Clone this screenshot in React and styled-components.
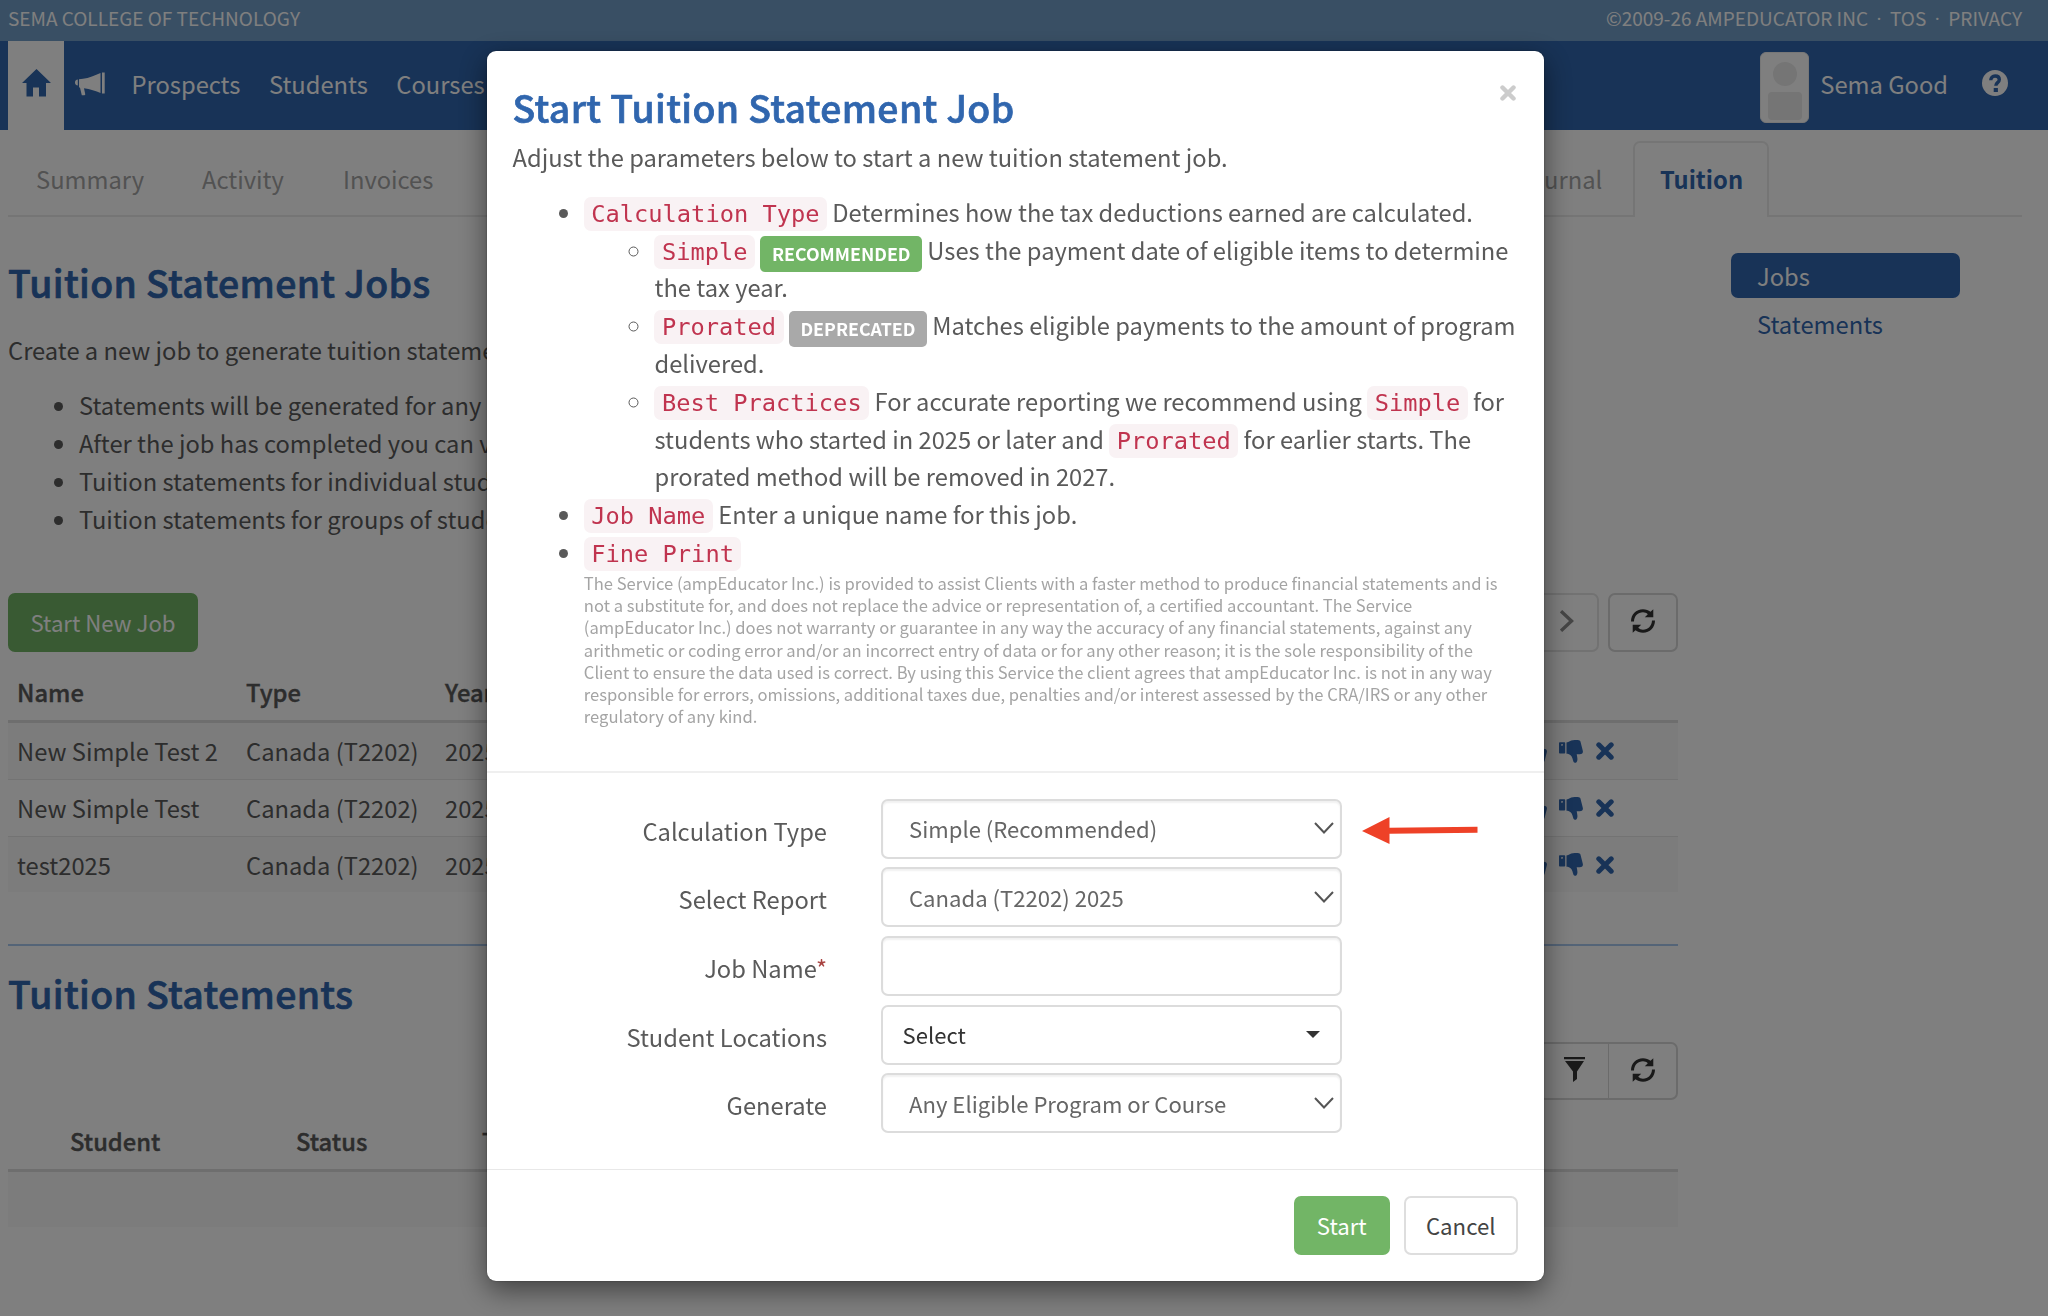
import React from 'react';
import styled, { createGlobalStyle, css } from 'styled-components';

const GlobalStyle = createGlobalStyle`
  * {
    box-sizing: border-box;
  }

  body {
    margin: 0;
    overflow: hidden;
    background: #fff;
    color: #5a5a5a;
    font-family: 'Noto Sans CJK SC', 'Open Sans', sans-serif;
    font-size: 23.72px;
    line-height: 37.8px;
  }

  h1,
  h2,
  p,
  ul {
    margin: 0;
    padding: 0;
  }
`;

const HomeIcon = () => (
  <svg width="29" height="28" viewBox="0 0 29 28" fill="currentColor">
    <path d="M14.5 0 29 14h-5v13.5h-7V18.5h-6v9H4.500V14H0z" />
  </svg>
);

const BullhornIcon = () => (
  <svg width="30" height="24" viewBox="0 0 30 24" fill="currentColor">
    <path d="M2.800 7.500v6C1.200 13.500 0 12.500 0 10.500s1.200-3 2.800-3z" />
    <path d="M4 7.200 8 6.800C14 6 20 3.500 25.500 1v20C21 19 15 17 9 16.200l1.300 6.300-.8.700H6.800L5 15.800l-1-.5z" />
    <path d="M27 .5h2.700v21H27z" />
  </svg>
);

const HelpIcon = () => (
  <svg width="26" height="26" viewBox="0 0 26 26">
    <circle cx="13" cy="13" r="13" fill="#fff" />
    <path
      d="M8.800 10.200c0-2.500 1.700-4.200 4.300-4.200 2.500 0 4.200 1.400 4.200 3.500 0 3.300-3.500 3-3.500 6.300"
      fill="none"
      stroke="#3066ae"
      strokeWidth="3.400"
    />
    <path d="M11.700 18h4.200v4h-4.200z" fill="#3066ae" />
  </svg>
);

const RefreshIcon = () => (
  <svg width="24" height="24" viewBox="0 0 24 24" fill="currentColor">
    <path d="M0 12.500C0 5.500 5 .3 12 .3c3 0 5.600 1 7.500 2.500L22.300.2V8.200h-8.500l3-3C15.500 4 13.800 3.300 12 3.300c-5 0-8.800 3.700-9 9.200z" />
    <path d="M24 11.500c0 7-5 12.200-12 12.200-3 0-5.600-1-7.500-2.500l-2.800 2.600V15.800h8.500l-3 3c1.300 1.200 3 1.900 4.800 1.900 5 0 8.800-3.700 9-9.200z" />
  </svg>
);

const ChevronIcon = () => (
  <svg width="14" height="22" viewBox="0 0 14 22">
    <path d="m1 1.200 10.500 9.800L1 20.800" fill="none" stroke="#8c8c8c" strokeWidth="3.400" />
  </svg>
);

const FilterIcon = () => (
  <svg width="21" height="25" viewBox="0 0 21 25" fill="currentColor">
    <path d="M0 0h21v2.200H0zM1 4h19l-7 10.500V22l-4 3V14.500z" />
  </svg>
);

const ThumbIcon = () => (
  <svg width="24" height="23" viewBox="0 0 24 23" fill="currentColor">
    <path
      fillRule="evenodd"
      d="M.8 2.200h4.600c.5 0 .8.300.8.800v9.800c0 .5-.3.800-.8.800H.8c-.5 0-.8-.3-.8-.8V3c0-.5.3-.8.8-.8zM3 4a.9.900 0 1 0 .1 1.800A.9.900 0 0 0 3 4z"
    />
    <path d="M7.500 2.600C10 1.800 11.500.5 14 .3c2.500-.3 5-.3 6.500.3.800.4 1 1 1.200 1.800l2.100 8.300c.4 1.800-.3 3-1.800 3.300-1.200.3-2.800.2-4.300.2.200 1.800.9 3.500.7 5.500-.1 2-1 3.100-2.400 3.100-1.300 0-1.600-1-2-2.500-.7-3-1.500-4.800-4-6-1-.4-1.800-.5-2.500-.5z" />
  </svg>
);

const RemoveIcon = ({ size = 18 }) => (
  <svg width={size} height={size} viewBox="0 0 18 18">
    <path
      d="m2.800 2.800 12.400 12.400M15.200 2.800 2.800 15.200"
      stroke="currentColor"
      strokeWidth="5"
      strokeLinecap="round"
    />
  </svg>
);

const SelectArrow = () => (
  <svg width="20" height="12" viewBox="0 0 20 12">
    <path d="m1 1 9 9.500L19 1" fill="none" stroke="#555" strokeWidth="2" />
  </svg>
);

const PointerArrow = () => (
  <svg width="116" height="28" viewBox="0 0 116 28" fill="#ee4127">
    <path d="M0 14 27.500 0v10.700l88-.9v6l-88 .9V27z" />
  </svg>
);

const jobs = ['New Simple Test 2', 'New Simple Test', 'test2025'];

const fields = [
  { label: 'Calculation Type', value: 'Simple (Recommended)', pointer: true },
  { label: 'Select Report', value: 'Canada (T2202) 2025' },
  { label: 'Job Name', required: true },
  { label: 'Student Locations', value: 'Select', dropdown: true },
  { label: 'Generate', value: 'Any Eligible Program or Course' },
];

const Field = ({ label, value, required, dropdown, pointer }) => (
  <FieldRow>
    <Label>
      {label}
      {required && <Required>*</Required>}
    </Label>
    <Control $dropdown={dropdown}>
      <ControlText>{value}</ControlText>
      {dropdown && <Caret />}
      {value && !dropdown && <SelectArrow />}
    </Control>
    {pointer && <PointerArrow />}
  </FieldRow>
);

const StartJobModal = () => (
  <Backdrop>
    <Modal>
      <ModalHeader>
        <TitleRow>
          <ModalTitle>Start Tuition Statement Job</ModalTitle>
          <CloseButton>
            <RemoveIcon size={16} />
          </CloseButton>
        </TitleRow>
        <p>Adjust the parameters below to start a new tuition statement job.</p>
        <HelpList>
          <li>
            <Code>Calculation Type</Code> Determines how the tax deductions
            earned are calculated.
            <SubList>
              <li>
                <Code>Simple</Code> <Badge $color="#72b566">Recommended</Badge>{' '}
                Uses the payment date of eligible items to determine the tax
                year.
              </li>
              <li>
                <Code>Prorated</Code> <Badge $color="#a9a9a9">Deprecated</Badge>{' '}
                Matches eligible payments to the amount of program delivered.
              </li>
              <li>
                <Code>Best Practices</Code> For accurate reporting we recommend
                using <Code>Simple</Code> for students who started in 2025 or
                later and <Code>Prorated</Code> for earlier starts. The prorated
                method will be removed in 2027.
              </li>
            </SubList>
          </li>
          <li>
            <Code>Job Name</Code> Enter a unique name for this job.
          </li>
          <li>
            <Code>Fine Print</Code>
            <FinePrint>
              The Service (ampEducator Inc.) is provided to assist Clients with
              a faster method to produce financial statements and is not a
              substitute for, and does not replace the advice or representation
              of, a certified accountant. The Service (ampEducator Inc.) does
              not warranty or guarantee in any way the accuracy of any financial
              statements, against any arithmetic or coding error and/or an
              incorrect entry of data or for any other reason; it is the sole
              responsibility of the Client to ensure the data used is correct.
              By using this Service the client agrees that ampEducator Inc. is
              not in any way responsible for errors, omissions, additional taxes
              due, penalties and/or interest assessed by the CRA/IRS or any
              other regulatory of any kind.
            </FinePrint>
          </li>
        </HelpList>
      </ModalHeader>
      <ModalBody>
        {fields.map((field) => (
          <Field key={field.label} {...field} />
        ))}
      </ModalBody>
      <ModalFooter>
        <Button $primary $width={95.5}>
          Start
        </Button>
        <Button $width={113.5}>Cancel</Button>
      </ModalFooter>
    </Modal>
  </Backdrop>
);

const App = () => (
  <>
    <GlobalStyle />
    <TopBar>
      <span>SEMA COLLEGE OF TECHNOLOGY</span>
      <TopLinks>
        <span>©2009-26 AMPEDUCATOR INC</span>
        <Dot>·</Dot>
        <span>TOS</span>
        <Dot>·</Dot>
        <span>PRIVACY</span>
      </TopLinks>
    </TopBar>
    <NavBar>
      <HomeTab>
        <HomeIcon />
      </HomeTab>
      <NavIcon>
        <BullhornIcon />
      </NavIcon>
      <NavLinks>
        <span>Prospects</span>
        <span>Students</span>
        <span>Courses</span>
      </NavLinks>
      <UserBox>
        <Avatar>
          <AvatarHead />
          <AvatarBody />
        </Avatar>
        <span>Sema Good</span>
      </UserBox>
      <HelpLink>
        <HelpIcon />
      </HelpLink>
    </NavBar>
    <TabBar>
      <Tab $width={166}>Summary</Tab>
      <Tab $width={141}>Activity</Tab>
      <Tab $width={150}>Invoices</Tab>
      <TabSpacer />
      <Tab $width={144}>Journal</Tab>
      <ActiveTab>Tuition</ActiveTab>
      <TabEnd />
    </TabBar>
    <Columns>
      <Main>
        <PageTitle>Tuition Statement Jobs</PageTitle>
        <Intro>Create a new job to generate tuition statements.</Intro>
        <IntroList>
          <li>Statements will be generated for any</li>
          <li>After the job has completed you can view</li>
          <li>Tuition statements for individual students</li>
          <li>Tuition statements for groups of students</li>
        </IntroList>
        <Toolbar>
          <Button $primary $width={190}>
            Start New Job
          </Button>
          <ToolButtons>
            <ToolButton $muted>
              <ChevronIcon />
            </ToolButton>
            <ToolButton>
              <RefreshIcon />
            </ToolButton>
          </ToolButtons>
        </Toolbar>
        <HeadRow>
          <span>Name</span>
          <span>Type</span>
          <span>Year</span>
        </HeadRow>
        {jobs.map((name, i) => (
          <JobRow key={name} $striped={i % 2 === 0} $first={i === 0}>
            <span>{name}</span>
            <span>Canada (T2202)</span>
            <span>2025</span>
            <Actions>
              <Flipped>
                <ThumbIcon />
              </Flipped>
              <ThumbIcon />
              <RemoveIcon />
            </Actions>
          </JobRow>
        ))}
        <Rule />
        <SectionTitle>Tuition Statements</SectionTitle>
        <StatementTools>
          <ToolGroup>
            <GroupButton>
              <FilterIcon />
            </GroupButton>
            <GroupButton>
              <RefreshIcon />
            </GroupButton>
          </ToolGroup>
        </StatementTools>
        <StatementHead>
          <span>Student</span>
          <span>Status</span>
          <span>Type</span>
        </StatementHead>
        <EmptyRow />
      </Main>
      <SideNav>
        <SideLink $active>Jobs</SideLink>
        <SideLink>Statements</SideLink>
      </SideNav>
    </Columns>
    <StartJobModal />
  </>
);

const TopBar = styled.div`
  display: flex;
  justify-content: space-between;
  height: 41px;
  padding: 0 26px 0 8px;
  background: #729ec8;
  color: #fff;
  font-size: 19px;
  line-height: 36px;
`;

const TopLinks = styled.div`
  display: flex;
  gap: 8.5px;
`;

const Dot = styled.span`
  font-family: 'Open Sans', sans-serif;
`;

const NavBar = styled.div`
  display: flex;
  height: 88.5px;
  padding: 0 40px 0 8px;
  background: #3066ae;
  color: #fff;
  line-height: 86px;
`;

const HomeTab = styled.div`
  width: 56px;
  height: 89px;
  padding: 28px 0 0 14px;
  background: #fff;
  color: #3066ae;
  line-height: 0;
`;

const NavIcon = styled.div`
  width: 67.5px;
  padding: 31px 0 0 11px;
  line-height: 0;
`;

const NavLinks = styled.div`
  display: flex;
  gap: 28.5px;
`;

const UserBox = styled.div`
  display: flex;
  gap: 11px;
  margin-left: auto;
`;

const Avatar = styled.div`
  display: flex;
  flex-direction: column;
  align-items: center;
  gap: 6px;
  width: 49px;
  height: 71px;
  margin-top: 11px;
  padding-top: 9px;
  border: 1px solid #eee;
  border-radius: 6px;
  background: #fff;
`;

const AvatarHead = styled.div`
  width: 24px;
  height: 24px;
  border-radius: 50%;
  background: #eaeaea;
`;

const AvatarBody = styled.div`
  width: 34px;
  height: 28px;
  border-radius: 4px;
  background: #eaeaea;
`;

const HelpLink = styled.div`
  padding: 29px 0 0 34px;
  line-height: 0;
`;

const TabBar = styled.div`
  display: flex;
  align-items: stretch;
  height: 76px;
  margin: 11.5px 26px 0 8px;
  line-height: 75px;
`;

const Tab = styled.div`
  width: ${({ $width }) => $width}px;
  padding-left: 28px;
  border-bottom: 2px solid #ebebeb;
  color: #a4a4a4;
`;

const TabSpacer = styled.div`
  flex: 1;
  border-bottom: 2px solid #ebebeb;
`;

const ActiveTab = styled.div`
  width: 136px;
  padding-left: 1px;
  border: 2px solid #ebebeb;
  border-bottom: 0;
  border-radius: 7px 7px 0 0;
  color: #3066ae;
  font-weight: 700;
  line-height: 71px;
  text-align: center;
`;

const TabEnd = styled.div`
  width: 253px;
  border-bottom: 2px solid #ebebeb;
`;

const Columns = styled.div`
  display: flex;
  padding: 36px 88px 0 8px;
  justify-content: space-between;
`;

const Main = styled.div`
  width: 1669.5px;
`;

/* medium weight thickened slightly, between medium and bold */
const titleStyles = css`
  color: #3066ae;
  font-size: 37.4px;
  font-weight: 500;
  letter-spacing: 0.35px;
  line-height: 48px;
  -webkit-text-stroke: 0.7px currentColor;
`;

const headStyles = css`
  font-weight: 500;
  -webkit-text-stroke: 0.4px currentColor;
`;

const PageTitle = styled.h1`
  ${titleStyles}
  margin-top: 5px;
`;

const Intro = styled.p`
  margin-top: 25px;
`;

const IntroList = styled.ul`
  margin-top: 17.5px;
  padding-left: 71px;
`;

const Toolbar = styled.div`
  display: flex;
  justify-content: space-between;
  margin-top: 56px;
`;

const Button = styled.button`
  width: ${({ $width }) => $width}px;
  height: 59px;
  padding: 0;
  border: 2px solid ${({ $primary }) => ($primary ? '#72b566' : '#dedede')};
  border-radius: 7px;
  background: ${({ $primary }) => ($primary ? '#72b566' : '#fff')};
  color: ${({ $primary }) => ($primary ? '#fff' : '#444')};
  font: inherit;
  font-size: 22.2px;
`;

const ToolButtons = styled.div`
  display: flex;
  gap: 9px;
`;

const ToolButton = styled.div`
  display: flex;
  align-items: center;
  justify-content: center;
  width: 70px;
  height: 59px;
  padding: 0 0 3px ${({ $muted }) => ($muted ? '6px' : '0')};
  border: 2px solid ${({ $muted }) => ($muted ? '#e4e4e4' : '#d6d6d6')};
  border-radius: 7px;
  color: #333;
`;

const HeadRow = styled.div`
  display: grid;
  grid-template-columns: 229px 199px 1fr;
  height: 70.5px;
  padding: 21px 0 0 9px;
  border-bottom: 3px solid #dcdcdc;
  ${headStyles}
`;

const JobRow = styled.div`
  display: grid;
  grid-template-columns: 229px 199px 1fr auto;
  align-items: center;
  height: 56.5px;
  padding: 0 64px 0 9px;
  border-top: ${({ $first }) => ($first ? 0 : '1.5px solid #e6e6e6')};
  background: ${({ $striped }) => ($striped ? '#f8f8f8' : '#fff')};
`;

const Actions = styled.div`
  display: flex;
  align-items: center;
  gap: 13px;
  color: #3066ae;
  line-height: 0;
`;

const Flipped = styled.span`
  margin-right: -1px;
  transform: scaleY(-1);
`;

const Rule = styled.div`
  height: 2px;
  margin-top: 52px;
  background: #a9c8ee;
`;

const SectionTitle = styled.h2`
  ${titleStyles}
  margin-top: 23px;
`;

const StatementTools = styled.div`
  display: flex;
  justify-content: flex-end;
  margin-top: 24.5px;
`;

const ToolGroup = styled.div`
  display: flex;
  height: 58px;
  border: 2px solid #d6d6d6;
  border-radius: 7px;
  color: #333;
`;

const GroupButton = styled.div`
  display: flex;
  align-items: center;
  justify-content: center;
  width: 68px;
  padding: 0 0 2px 2px;

  & + & {
    border-left: 1px solid #d6d6d6;
  }
`;

const StatementHead = styled.div`
  display: grid;
  grid-template-columns: 226px 186px 1fr;
  height: 72px;
  padding: 22px 0 0 62px;
  border-bottom: 3px solid #dcdcdc;
  ${headStyles}
`;

const EmptyRow = styled.div`
  height: 55px;
  background: #f8f8f8;
`;

const SideNav = styled.div`
  width: 229.5px;
`;

const SideLink = styled.div`
  height: 45px;
  margin-bottom: 3px;
  padding-left: 26.5px;
  border-radius: 7px;
  background: ${({ $active }) => ($active ? '#3066ae' : 'transparent')};
  color: ${({ $active }) => ($active ? '#fff' : '#3066ae')};
  line-height: 45px;
`;

const Backdrop = styled.div`
  position: fixed;
  inset: 0;
  display: flex;
  justify-content: center;
  align-items: flex-start;
  padding: 51px 17.5px 0 0;
  background: rgba(0, 0, 0, 0.5);
`;

const Modal = styled.div`
  width: 1057.5px;
  border-radius: 9px;
  background: #fff;
  box-shadow: 0 9px 28px rgba(0, 0, 0, 0.5), 0 0 2px rgba(0, 0, 0, 0.4);
`;

const ModalHeader = styled.div`
  height: 721.5px;
  padding: 32px 26px 0;
  border-bottom: 2px solid #efefef;
`;

const TitleRow = styled.div`
  display: flex;
  justify-content: space-between;
  margin-bottom: 6.5px;
`;

const ModalTitle = styled.h2`
  ${titleStyles}
`;

const CloseButton = styled.span`
  padding: 2px 2.5px 0 0;
  color: #ccc;
  line-height: 0;
`;

const HelpList = styled.ul`
  margin-top: 17.5px;
  padding-left: 71.3px;
`;

const SubList = styled.ul`
  padding-left: 70.7px;
  list-style: circle;
`;

const Code = styled.code`
  padding: 3px 7.5px;
  border-radius: 7px;
  background: #f9f2f4;
  color: #c0344f;
  font-family: 'DejaVu Sans Mono', monospace;
  font-size: 23.7px;
  line-height: 1;
`;

const Badge = styled.span`
  padding: 4px 11.5px 6px;
  border-radius: 5px;
  background: ${({ $color }) => $color};
  color: #fff;
  font-size: 17.8px;
  font-weight: 700;
  line-height: 1;
  text-transform: uppercase;
  vertical-align: -1px;
`;

const FinePrint = styled.div`
  margin-top: 1px;
  color: #a4a4a4;
  font-size: 16.6px;
  line-height: 22.25px;
`;

const ModalBody = styled.div`
  display: flex;
  flex-direction: column;
  gap: 8.7px;
  height: 397.5px;
  padding-top: 26px;
  border-bottom: 1.5px solid #e8e8e8;
`;

const FieldRow = styled.div`
  display: grid;
  grid-template-columns: 340.5px 461px auto;
  column-gap: 53.5px;
  justify-content: start;
  align-items: center;
  height: 60px;

  & > svg {
    margin: 5px 0 0 -33px;
  }
`;

const Label = styled.div`
  padding-top: 4px;
  text-align: right;
`;

const Required = styled.span`
  color: #a94442;
`;

const Control = styled.div`
  display: flex;
  justify-content: space-between;
  align-items: center;
  height: 60px;
  padding: 0 ${({ $dropdown }) => ($dropdown ? '20px' : '6px')} 1px
    ${({ $dropdown }) => ($dropdown ? '20px' : '26.5px')};
  border: 2px solid #dcdcdc;
  border-radius: 7px;
  color: ${({ $dropdown }) => ($dropdown ? '#333' : '#666')};
  font-size: 22.1px;
  box-shadow: ${({ $dropdown }) =>
    $dropdown ? 'none' : 'inset 0 2px 2px rgba(0, 0, 0, 0.06)'};
`;

const ControlText = styled.span`
  padding-top: 2px;
`;

const Caret = styled.span`
  border-top: 7px solid #333;
  border-right: 7px solid transparent;
  border-left: 7px solid transparent;
`;

const ModalFooter = styled.div`
  display: flex;
  justify-content: flex-end;
  gap: 14.5px;
  height: 111px;
  padding: 26px 26.5px 0;
`;

export default App;
